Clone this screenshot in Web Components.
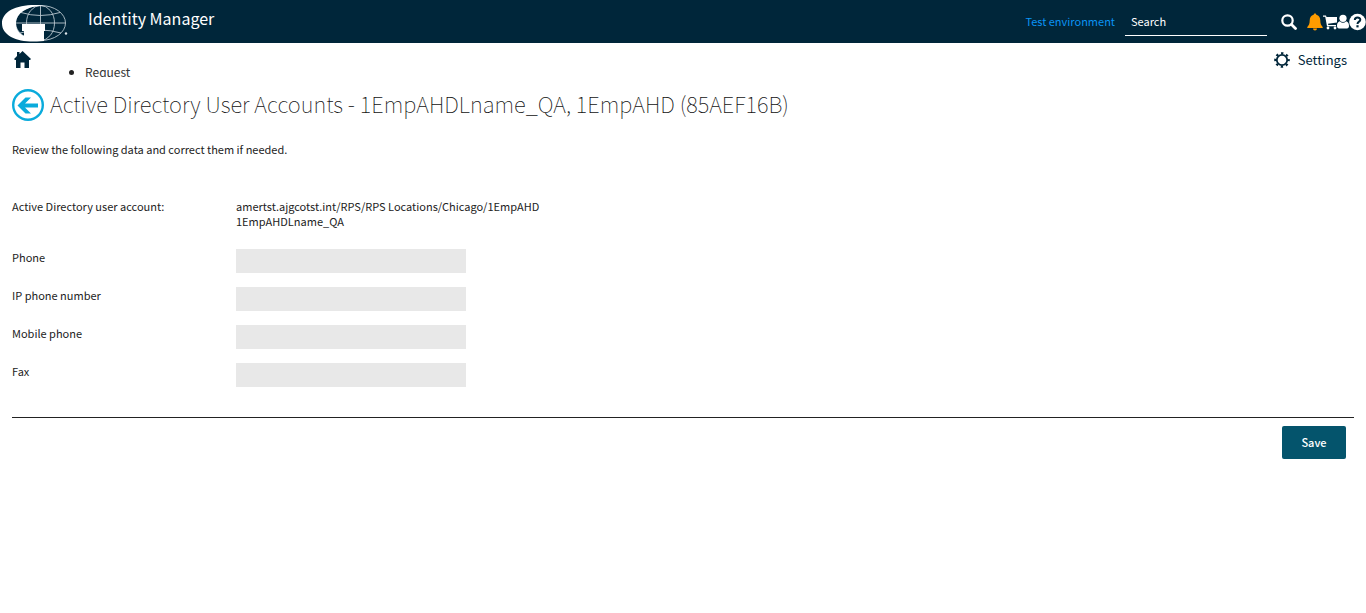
<!DOCTYPE html>
<html lang="en">
<head>
<meta charset="utf-8">
<meta name="viewport" content="width=device-width, initial-scale=1">
<title>Identity Manager</title>
<style>
body { margin: 0; background: #fff; color: #222; font: 11px/15px "Noto Sans CJK SC", "Noto Sans", sans-serif; }
</style>
</head>
<body>
<identity-app></identity-app>
<script>
const define = (name, html, setup) => customElements.define(name, class extends HTMLElement {
  connectedCallback() {
    if (this.shadowRoot) return;
    const template = document.createElement('template');
    template.innerHTML = html;
    this.attachShadow({ mode: 'open' }).append(template.content.cloneNode(true));
    if (setup) setup(this, this.shadowRoot);
  }
});

/* Globe with a bold G over its left half */
define('brand-logo', `
<style>:host{display:block} svg{display:block}</style>
<svg width="70" height="43" viewBox="0 0 70 43" role="img" aria-label="Company logo">
  <g fill="none" stroke="#b9c6ce" stroke-width=".9">
    <ellipse cx="40.500" cy="23" rx="25" ry="17.500"/>
    <ellipse cx="40.500" cy="23" rx="14" ry="17.500"/>
    <path d="M40.500 5.500v35M16 23h49.500M21 12.500q19.500 6 39 0M20 33q20-6 41 0"/>
  </g>
  <path fill="#fff" d="M44 5.500C20 3 2 10 2 23.500 2 36 18 42.500 37 41.500l7-.5V31h1v-7H22v7h2v5C18 33 16 28 16 23.500 16 13 27 6 44 5.500z"/>
  <circle cx="66" cy="33.500" r="1.200" fill="#dde5ea"/>
</svg>`);

define('search-box', `
<style>
:host{display:flex;align-items:center;gap:14px}
input{box-sizing:border-box;width:142px;height:28px;padding:0 6px;border:0;border-bottom:1px solid #fff;border-radius:0;background:none;color:#fff;font:inherit;outline:0}
input::placeholder{color:#fff;opacity:1}
button{padding:0;border:0;background:none;cursor:pointer}
svg{display:block}
</style>
<input id="q" type="search" placeholder="Search" aria-label="Search">
<button type="button" aria-label="Start search"><svg width="16" height="16" viewBox="0 0 16 16" fill="none" stroke="#fff"><circle cx="6.500" cy="6.500" r="5.200" stroke-width="2.200"/><path d="M10.500 10.500L14.500 14.500" stroke-width="2.800" stroke-linecap="round"/></svg></button>`);

define('header-tools', `
<style>
:host{display:flex;align-items:center}
button{padding:0;border:0;background:none;cursor:pointer}
svg{display:block}
</style>
<button type="button" aria-label="Notifications"><svg width="16" height="18" viewBox="0 0 16 18" fill="#ff9c00"><path d="M8 .5c.8 0 1.300.5 1.300 1.300C12 2.500 13.300 4.500 13.300 7.500c0 3.500 1 5 2.400 6.500v1H.3v-1C1.700 12.500 2.700 11 2.700 7.500 2.700 4.500 4 2.500 6.700 1.800 6.700 1 7.200.5 8 .5zM6 15.500h4a2 2 0 0 1-4 0z"/></svg></button>
<button type="button" aria-label="Shopping cart"><svg width="14" height="16" viewBox="0 0 14 16" fill="#fff"><path d="M0 1.500h3l.5 1.500H14V8.500L5 9.700l.3 1.300H13v1.300H4L2.200 2.800H0z"/><circle cx="5" cy="14" r="1.400"/><circle cx="12" cy="14" r="1.400"/></svg></button>
<button type="button" aria-label="Profile"><svg width="12" height="16" viewBox="0 0 12 16" fill="#fff"><circle cx="6" cy="4.300" r="3.600"/><path d="M2.800 7.300Q6 10.300 9.200 7.300C11.300 8 12 9.600 12 12c0 1.600-.8 2.500-2 2.500H2c-1.200 0-2-.9-2-2.500 0-2.400.7-4 2.800-4.700z"/></svg></button>
<button type="button" aria-label="Help"><svg width="17" height="18" viewBox="0 0 17 18"><circle cx="8.500" cy="9" r="8.300" fill="#fff"/><path d="M5.800 7C5.800 3.700 11.300 3.800 11.300 6.700 11.300 8.700 8.500 8.600 8.500 11" fill="none" stroke="#00263a" stroke-width="2"/><path d="M7.400 12.200h2.200v2.200H7.400z" fill="#00263a"/></svg></button>`);

define('app-header', `
<style>
:host{display:flex;align-items:center;height:43px;background:#00263a;color:#fff}
.name{margin-left:18px;padding-bottom:8px;font-size:16px;line-height:24px}
.env{margin-left:auto;margin-right:10px;color:#0a94f5}
search-box{margin-right:10px}
</style>
<brand-logo></brand-logo>
<span class="name"><slot></slot></span>
<span class="env">Test environment</span>
<search-box></search-box>
<header-tools></header-tools>`);

define('app-nav', `
<style>
:host{display:flex;justify-content:space-between;align-items:flex-start;height:34px;padding:0 19px 0 12px;overflow:hidden}
.left{display:flex}
svg{display:block}
.home{padding:6px 0 0}
ul{margin:0;padding:21px 0 0 52px;font-size:12px}
li a{color:#333;text-decoration:none}
button{display:flex;align-items:center;gap:8px;padding:6px 0 0;border:0;background:none;color:#00263a;font:inherit;font-size:13px;line-height:22px;cursor:pointer}
</style>
<nav class="left">
  <a class="home" href="#home" aria-label="Home"><svg width="21" height="20" viewBox="0 0 21 20" fill="#00263a"><path d="M10.500 2L19 10l-1 1h-1v8h-4.500v-5.500h-4V19H4v-8H3l-1-1L5 7V3h2.500v2z"/></svg></a>
  <ul><li><a href="#request">Request</a></li></ul>
</nav>
<button type="button"><svg width="16" height="16" viewBox="0 0 16 16" fill="none" stroke="#00263a"><circle cx="8" cy="8" r="5.200" stroke-width="1.800"/><circle cx="8" cy="8" r="6.800" stroke-width="2" stroke-dasharray="2.400 2.940" stroke-dashoffset="1.200"/></svg>Settings</button>`);

define('page-title', `
<style>
:host{display:flex;align-items:center;gap:6px}
a,svg{display:block}
h1{margin:0;padding-bottom:4px;font-size:22px;line-height:28px;font-weight:100;color:#111}
</style>
<a href="#back" aria-label="Back"><svg width="32" height="32" viewBox="0 0 32 32"><circle cx="16" cy="16" r="14.800" fill="none" stroke="#0aabdc" stroke-width="2.400"/><path d="M5.500 16.500L13.500 8.500h5.500l-6 6H26v4H13l6 6h-5.500z" fill="#0aabdc"/></svg></a>
<h1><slot></slot></h1>`);

define('data-row', `
<style>
:host{display:grid;grid-template-columns:224px minmax(0,320px)}
</style>
<span></span><div><slot></slot></div>`, (host, root) => {
  root.querySelector('span').textContent = host.getAttribute('label');
});

define('text-field', `
<style>
:host{display:grid;grid-template-columns:224px minmax(0,230px)}
label{padding-top:1px}
input{box-sizing:border-box;width:100%;height:24px;padding:0 6px;border:0;background:#e8e8e8;color:inherit;font:inherit}
</style>
<label for="field"></label><input id="field" type="text">`, (host, root) => {
  root.querySelector('label').textContent = host.getAttribute('label');
});

define('save-button', `
<style>
:host{display:block}
button{min-width:64px;height:33px;padding:0 16px;border:0;border-radius:2px;background:#04546c;color:#fff;font:inherit;font-weight:500;cursor:pointer}
</style>
<button type="submit"><slot></slot></button>`);

define('identity-app', `
<style>
:host{display:block}
main{padding:12px}
p{margin:21px 0 42px}
.fields{display:grid;gap:14px;margin-top:20px}
footer{display:flex;justify-content:flex-end;margin-top:30px;padding:8px 8px 0;border-top:1px solid #222}
</style>
<app-header>Identity Manager</app-header>
<app-nav></app-nav>
<main>
  <page-title>Active Directory User Accounts - 1EmpAHDLname_QA, 1EmpAHD (85AEF16B)</page-title>
  <p>Review the following data and correct them if needed.</p>
  <data-row label="Active Directory user account:">amertst.ajgcotst.int/RPS/RPS Locations/Chicago/1EmpAHD 1EmpAHDLname_QA</data-row>
  <div class="fields">
    <text-field label="Phone"></text-field>
    <text-field label="IP phone number"></text-field>
    <text-field label="Mobile phone"></text-field>
    <text-field label="Fax"></text-field>
  </div>
  <footer><save-button>Save</save-button></footer>
</main>`);
</script>
</body>
</html>
